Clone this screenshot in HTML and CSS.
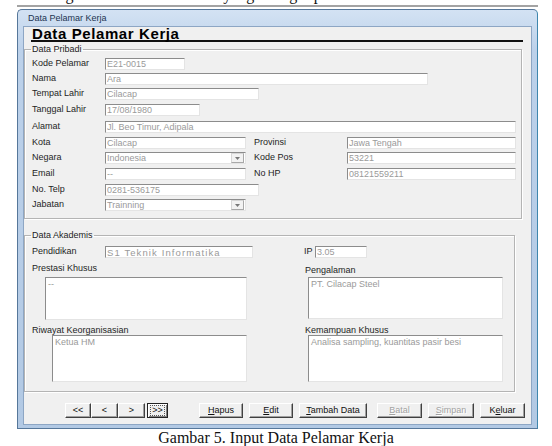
FILE: index.html
```html
<!DOCTYPE html>
<html lang="id">
<head>
    <meta charset="UTF-8">
    <meta name="viewport" content="width=device-width, initial-scale=1.0">
    <title>Input Data Pelamar Kerja</title>
    <link rel="stylesheet" href="styles.css">
</head>
<body>
    <div class="lead-clip">
        <p class="lead-text">Lalu bagian form ini berisi data yang sering dipakai oleh admin.</p>
    </div>
    <div class="page-rule"></div>

    <div class="window">
        <div class="titlebar">Data Pelamar Kerja</div>
        <div class="client">
            <h1 class="form-title">Data Pelamar Kerja</h1>

            <!-- data pribadi -->
            <fieldset class="group group-pribadi">
                <legend>Data Pribadi</legend>
                <div class="rows-pribadi">
                    <div class="row">
                        <label>Kode Pelamar</label>
                        <input class="field w-kode" value="E21-0015" readonly>
                    </div>
                    <div class="row">
                        <label>Nama</label>
                        <input class="field w-nama" value="Ara" readonly>
                    </div>
                    <div class="row">
                        <label>Tempat Lahir</label>
                        <input class="field w-tempat" value="Cilacap" readonly>
                    </div>
                    <div class="row">
                        <label>Tanggal Lahir</label>
                        <input class="field w-tgl" value="17/08/1980" readonly>
                    </div>
                    <div class="row">
                        <label>Alamat</label>
                        <input class="field w-alamat" value="Jl. Beo Timur, Adipala" readonly>
                    </div>
                    <div class="row">
                        <label>Kota</label>
                        <input class="field w-kota" value="Cilacap" readonly>
                        <label class="label-right">Provinsi</label>
                        <input class="field w-right" value="Jawa Tengah" readonly>
                    </div>
                    <div class="row">
                        <label>Negara</label>
                        <div class="combo w-kota">
                            <span class="combo-text">Indonesia</span>
                            <span class="combo-btn"><svg width="5" height="3" viewBox="0 0 5 3"><path d="M0 0h5L2.5 3z" fill="#777"/></svg></span>
                        </div>
                        <label class="label-right">Kode Pos</label>
                        <input class="field w-right" value="53221" readonly>
                    </div>
                    <div class="row">
                        <label>Email</label>
                        <input class="field w-kota" value="--" readonly>
                        <label class="label-right">No HP</label>
                        <input class="field w-right" value="08121559211" readonly>
                    </div>
                    <div class="row">
                        <label>No. Telp</label>
                        <input class="field w-tempat" value="0281-536175" readonly>
                    </div>
                    <div class="row">
                        <label>Jabatan</label>
                        <div class="combo w-kota">
                            <span class="combo-text">Trainning</span>
                            <span class="combo-btn"><svg width="5" height="3" viewBox="0 0 5 3"><path d="M0 0h5L2.5 3z" fill="#777"/></svg></span>
                        </div>
                    </div>
                </div>
            </fieldset>

            <!-- data akademis -->
            <fieldset class="group group-akademis">
                <legend>Data Akademis</legend>
                <div class="akademis-grid">
                    <div class="row">
                        <label>Pendidikan</label>
                        <input class="field field-wide w-pend" value="S1 Teknik Informatika" readonly>
                    </div>
                    <div class="row">
                        <label class="label-ip">IP</label>
                        <input class="field w-ip" value="3.05" readonly>
                    </div>

                    <div class="cap">Prestasi Khusus</div>
                    <div class="cap cap-right cap-low">Pengalaman</div>

                    <textarea class="memo memo-prestasi" readonly>--</textarea>
                    <textarea class="memo memo-right memo-short" readonly>PT. Cilacap Steel</textarea>

                    <div class="cap">Riwayat Keorganisasian</div>
                    <div class="cap cap-right">Kemampuan Khusus</div>

                    <textarea class="memo memo-riwayat" readonly>Ketua HM</textarea>
                    <textarea class="memo memo-right" readonly>Analisa sampling, kuantitas pasir besi</textarea>
                </div>
            </fieldset>

            <div class="button-bar">
                <div class="nav-group">
                    <button class="btn btn-first">&lt;&lt;</button>
                    <button class="btn btn-step">&lt;</button>
                    <button class="btn btn-step">&gt;</button>
                    <button class="btn btn-last btn-focus"><span class="focus-ring">&gt;&gt;</span></button>
                </div>
                <div class="action-group">
                    <button class="btn btn-hapus"><u>H</u>apus</button>
                    <button class="btn btn-edit"><u>E</u>dit</button>
                    <button class="btn btn-tambah"><u>T</u>ambah Data</button>
                    <button class="btn btn-batal" disabled><u>B</u>atal</button>
                    <button class="btn btn-simpan" disabled><u>S</u>impan</button>
                    <button class="btn btn-keluar">K<u>e</u>luar</button>
                </div>
            </div>
        </div>
    </div>

    <p class="caption">Gambar 5. Input Data Pelamar Kerja</p>
</body>
</html>
```

FILE: styles.css
```css
body {
    margin: 0;
    background-color: #fff;
    font-family: "Liberation Sans", Arial, sans-serif;
    color: #222;
}

/* only the bottom of the previous text line shows */
.lead-clip {
    height: 4px;
    overflow: hidden;
}
.lead-text {
    margin: -14px 0 0;
    padding-left: 17px;
    font: 16px/18px "Liberation Serif", "Times New Roman", serif;
    white-space: nowrap;
    color: #111;
}
.page-rule {
    height: 2px;
    margin: 1px 14px 0 17px;
    background-color: #a3a3a3;
}

/* window frame */
.window {
    box-sizing: border-box;
    width: 521px;
    margin: 2px 0 0 17px;
    padding: 0 5px 3px;
    border: 1px solid #56779a;
    border-right-color: #3f86ad;
    border-radius: 5px 5px 0 0;
    background: linear-gradient(to bottom, #d3e2f3, #bcd1ea 40px, #b2c9e4);
}
.titlebar {
    height: 16px;
    line-height: 16px;
    padding-left: 5px;
    font-size: 9px;
    color: #1c3350;
}
.client {
    background-color: #f0f0f0;
    border: 1px solid #8da6c4;
    padding-bottom: 6px;
}

.form-title {
    margin: 0 8px 0 7px;
    padding-left: 1px;
    font: bold 15px/13px "Liberation Sans", Arial, sans-serif;
    letter-spacing: 0.6px;
    color: #000;
    border-bottom: 2px solid #111;
}

/* group boxes */
.group {
    box-sizing: border-box;
    margin: 3px 0 0;
    padding: 4px 0 7px 6px;
    border: 1px solid #b4b4b4;
    box-shadow: inset 1px 1px 0 #fff, 1px 1px 0 #fff;
}
.group legend {
    padding: 0 1px;
    font-size: 9px;
    line-height: 9px;
    color: #222;
}
.group-pribadi {
    width: 498px;
}
.group-akademis {
    width: 491px;
    margin-top: 12px;
    padding: 6px 0 9px 6px;
}

.rows-pribadi {
    display: grid;
    grid-template-rows: 15px 15px 16px 17px 16px 15px 16px 16px 15px 12px;
    padding-left: 1px;
}
.row {
    display: flex;
    align-items: flex-start;
}
.row label {
    flex: none;
    width: 73px;
    font-size: 9px;
    line-height: 11px;
    color: #1e1e1e;
}
.row .label-right {
    width: 93px;
    margin-left: 8px;
}
.row .label-ip {
    width: 11px;
}

/* text fields */
.field,
.combo,
.memo {
    box-sizing: border-box;
    margin: 0;
    border: 1px solid;
    border-color: #8c8c8c #e4e4e4 #e4e4e4 #8c8c8c;
    background-color: #fff;
    font: 9px/10px "Liberation Sans", Arial, sans-serif;
    color: #9a9a9a;
}
.field {
    height: 12px;
    padding: 0 0 0 1px;
    outline: none;
}
.field-wide {
    letter-spacing: 1.1px;
    font-size: 9.5px;
}
.w-kode { width: 80px; }
.w-nama { width: 323px; }
.w-tempat { width: 154px; }
.w-tgl { width: 95px; }
.w-alamat { width: 411px; }
.w-kota { width: 141px; }
.w-right { width: 169px; }
.w-pend { width: 148px; }
.w-ip { width: 52px; }

.combo {
    display: flex;
    height: 12px;
    padding-left: 1px;
}
.combo-text {
    flex: 1;
}
.combo-btn {
    display: flex;
    align-items: center;
    justify-content: center;
    box-sizing: border-box;
    width: 13px;
    height: 10px;
    margin-right: 1px;
    border: 1px solid #d6d6d6;
    border-right-color: #a8a8a8;
    border-bottom-color: #a8a8a8;
    background-color: #f2f2f2;
}

/* akademis */
.akademis-grid {
    display: grid;
    grid-template-columns: 272px 1fr;
    grid-template-rows: 12px 19px 43px 15px 47px;
    padding-left: 1px;
}
.cap {
    padding-top: 5px;
    font-size: 9px;
    line-height: 10px;
    color: #1e1e1e;
}
.cap-right {
    padding-left: 1px;
}
.cap-low {
    padding-top: 7px;
}
.memo {
    display: block;
    resize: none;
    overflow: hidden;
    padding: 1px 2px;
    outline: none;
    height: 47px;
    width: 195px;
}
.memo-prestasi {
    width: 202px;
    height: 43px;
    margin-left: 13px;
}
.memo-riwayat {
    margin-left: 20px;
}
.memo-right {
    margin-left: 4px;
}
.memo-short {
    height: 42px;
}

/* buttons */
.button-bar {
    display: flex;
    margin-top: 11px;
    padding-left: 41px;
}
.nav-group {
    display: flex;
}
.action-group {
    display: flex;
    gap: 6px;
    margin-left: 31px;
}
.btn {
    box-sizing: border-box;
    height: 15px;
    margin: 0;
    padding: 0;
    border: 1px solid;
    border-color: #fff #404040 #404040 #fff;
    box-shadow: inset -1px -1px 0 #a0a0a0;
    background-color: #f0f0f0;
    font: 9px/13px "Liberation Sans", Arial, sans-serif;
    color: #111;
    text-align: center;
}
.btn u {
    text-decoration-thickness: 1px;
}
.btn:disabled {
    color: #a3a3a3;
    text-shadow: 1px 1px 0 #fff;
}
.btn-focus {
    border-color: #222;
    box-shadow: inset 1px 1px 0 #fff, inset -1px -1px 0 #808080;
}
.focus-ring {
    display: block;
    margin: 1px 2px;
    border: 1px dotted #555;
    line-height: 9px;
}
.btn-first { width: 26px; }
.btn-step { width: 27px; }
.btn-last { width: 21px; margin-left: 2px; }
.btn-hapus { width: 44px; }
.btn-edit { width: 44px; }
.btn-tambah { width: 68px; }
.btn-batal { width: 45px; margin-left: 4px; }
.btn-simpan { width: 46px; }
.btn-keluar { width: 45px; }

.caption {
    margin: 0;
    text-align: center;
    font: 16px/18px "Liberation Serif", "Times New Roman", serif;
    color: #111;
}
```
